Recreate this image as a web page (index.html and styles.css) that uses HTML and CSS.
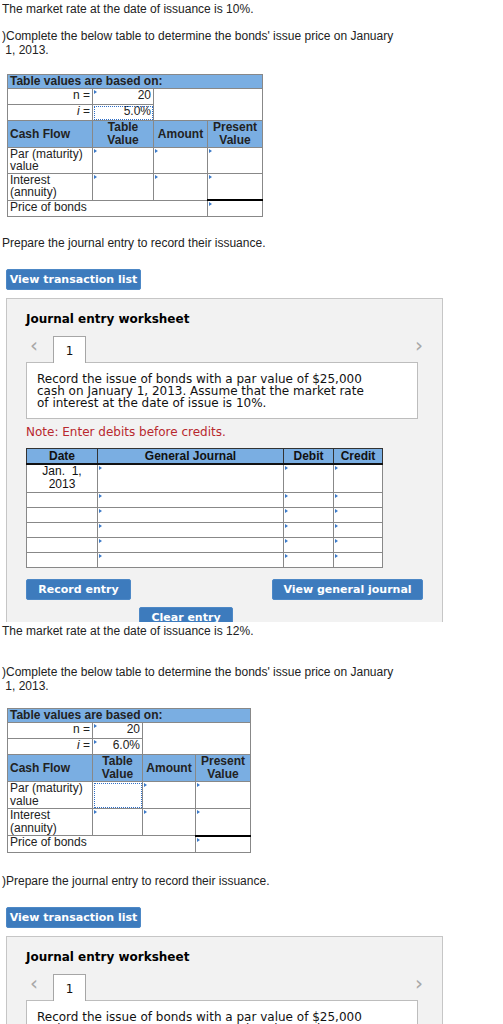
FILE: index.html
```html
<!DOCTYPE html>
<html lang="en">
<head>
  <meta charset="UTF-8">
  <meta name="viewport" content="width=device-width, initial-scale=1.0">
  <title>Bonds issue price</title>
  <link rel="stylesheet" href="styles.css">
</head>
<body>

  <!-- part 1: market rate 10% -->
  <div class="part part-clip">
    <p class="rate">The market rate at the date of issuance is 10%.</p>
    <p class="ask">)Complete the below table to determine the bonds' issue price on January<br>&nbsp;1, 2013.</p>

    <table class="pv pv-wide">
      <colgroup>
        <col class="c1"><col class="c2"><col class="c3"><col class="c4">
      </colgroup>
      <tr class="head"><td colspan="4" class="based">Table values are based on:</td></tr>
      <tr class="small">
        <td class="right">n =</td>
        <td class="right mk">20</td>
        <td colspan="2" rowspan="2"></td>
      </tr>
      <tr class="small">
        <td class="right"><i>i</i> =</td>
        <td class="right focus">5.0%</td>
      </tr>
      <tr class="head">
        <td class="left">Cash Flow</td>
        <td class="center">Table<br>Value</td>
        <td class="center">Amount</td>
        <td class="center">Present<br>Value</td>
      </tr>
      <tr class="big">
        <td>Par (maturity)<br>value</td>
        <td class="mk"></td><td class="mk"></td><td class="mk"></td>
      </tr>
      <tr class="big">
        <td>Interest<br>(annuity)</td>
        <td class="mk"></td><td class="mk"></td><td class="mk"></td>
      </tr>
      <tr class="small">
        <td colspan="3">Price of bonds</td>
        <td class="mk total"></td>
      </tr>
    </table>

    <p class="prep">Prepare the journal entry to record their issuance.</p>
    <button class="btn btn-list" type="button">View transaction list</button>

    <div class="sheet">
      <h2 class="sheet-title">Journal entry worksheet</h2>
      <div class="tabs">
        <span class="arrow">&lsaquo;</span>
        <span class="tab">1</span>
        <span class="arrow arrow-right">&rsaquo;</span>
      </div>
      <div class="desc">Record the issue of bonds with a par value of $25,000<br>cash on January 1, 2013. Assume that the market rate<br>of interest at the date of issue is 10%.</div>
      <p class="note">Note: Enter debits before credits.</p>

      <table class="jr">
        <colgroup>
          <col class="j1"><col class="j2"><col class="j3"><col class="j4">
        </colgroup>
        <tr class="jhead">
          <th>Date</th><th>General Journal</th><th>Debit</th><th>Credit</th>
        </tr>
        <tr class="jfirst">
          <td class="center">Jan.&nbsp; 1,<br>2013</td><td class="mk"></td><td class="mk"></td><td class="mk"></td>
        </tr>
        <tr class="jrow"><td></td><td class="mk"></td><td class="mk"></td><td class="mk"></td></tr>
        <tr class="jrow"><td></td><td class="mk"></td><td class="mk"></td><td class="mk"></td></tr>
        <tr class="jrow"><td></td><td class="mk"></td><td class="mk"></td><td class="mk"></td></tr>
        <tr class="jrow"><td></td><td class="mk"></td><td class="mk"></td><td class="mk"></td></tr>
        <tr class="jrow"><td></td><td class="mk"></td><td class="mk"></td><td class="mk"></td></tr>
      </table>

      <div class="actions">
        <button class="btn btn-record" type="button">Record entry</button>
        <button class="btn btn-journal" type="button">View general journal</button>
      </div>
      <button class="btn btn-clear" type="button">Clear entry</button>
    </div>
  </div>

  <!-- part 2: market rate 12% -->
  <div class="part">
    <p class="rate">The market rate at the date of issuance is 12%.</p>
    <p class="ask ask-2">)Complete the below table to determine the bonds' issue price on January<br>&nbsp;1, 2013.</p>

    <table class="pv pv-narrow">
      <colgroup>
        <col class="c1"><col class="n2"><col class="n3"><col class="c4">
      </colgroup>
      <tr class="head"><td colspan="4" class="based">Table values are based on:</td></tr>
      <tr class="small">
        <td class="right">n =</td>
        <td class="right mk">20</td>
        <td colspan="2" rowspan="2"></td>
      </tr>
      <tr class="small">
        <td class="right"><i>i</i> =</td>
        <td class="right mk">6.0%</td>
      </tr>
      <tr class="head">
        <td class="left">Cash Flow</td>
        <td class="center">Table<br>Value</td>
        <td class="center">Amount</td>
        <td class="center">Present<br>Value</td>
      </tr>
      <tr class="big">
        <td>Par (maturity)<br>value</td>
        <td class="focus"></td><td class="mk"></td><td class="mk"></td>
      </tr>
      <tr class="big">
        <td>Interest<br>(annuity)</td>
        <td class="mk"></td><td class="mk"></td><td class="mk"></td>
      </tr>
      <tr class="small">
        <td colspan="3">Price of bonds</td>
        <td class="mk total"></td>
      </tr>
    </table>

    <p class="prep prep-2">)Prepare the journal entry to record their issuance.</p>
    <button class="btn btn-list" type="button">View transaction list</button>

    <div class="sheet">
      <h2 class="sheet-title">Journal entry worksheet</h2>
      <div class="tabs">
        <span class="arrow">&lsaquo;</span>
        <span class="tab">1</span>
        <span class="arrow arrow-right">&rsaquo;</span>
      </div>
      <div class="desc">Record the issue of bonds with a par value of $25,000<br>cash on January 1, 2013. Assume that the market rate<br>of interest at the date of issue is 12%.</div>
      <p class="note">Note: Enter debits before credits.</p>
    </div>
  </div>

</body>
</html>
```

FILE: styles.css
```css
body {
  margin: 0;
  padding: 0 0 0 2px;
  background-color: #fff;
  color: #222;
  font: 12px/14px "Liberation Sans", Arial, sans-serif;
}

p {
  margin: 0;
}

.part-clip {
  height: 622px;
  overflow: hidden;
}

.rate {
  margin-top: 2px;
}

.ask {
  margin-top: 13px;
}

.ask-2 {
  margin-top: 27px;
}

/* present value tables */
.pv {
  border-collapse: collapse;
  table-layout: fixed;
  margin: 17px 0 0 5px;
  font-size: 12px;
  line-height: 13px;
}

.pv-narrow {
  margin-top: 15px;
}

.pv td {
  border: 1px solid #888;
  padding: 0 2px;
  vertical-align: top;
  position: relative;
}

.c1 { width: 85px; }
.c2 { width: 61px; }
.c3 { width: 54px; }
.c4 { width: 55px; }
.n2 { width: 50px; }
.n3 { width: 53px; }

.pv .head td {
  background-color: #7aaee2;
  font-weight: bold;
  vertical-align: middle;
}

.pv .based {
  height: 13px;
  line-height: 13px;
}

.pv .small td {
  height: 15px;
}

.pv .head td.left,
.pv .head td.center {
  height: 25px;
}

.pv .big td {
  height: 25px;
}

.pv-wide .big td {
  line-height: 12px;
}

.right { text-align: right; }
.center { text-align: center; }

.pv td.total {
  border-top: 2px solid #000;
}

.focus {
  outline: 1px dotted #2f6fc7;
  outline-offset: -2px;
}

/* little blue markers in input cells */
.mk::before {
  content: "";
  position: absolute;
  left: 1px;
  top: 1px;
  border-left: 3px solid #3b7ac8;
  border-top: 2px solid transparent;
  border-bottom: 2px solid transparent;
}

.prep {
  margin-top: 19px;
}

.prep-2 {
  margin-top: 21px;
}

/* buttons */
.btn {
  display: block;
  background-color: #3d7bbd;
  color: #fff;
  border: 1px solid #4d88c6;
  border-radius: 2px;
  font: bold 11px/19px "DejaVu Sans", Verdana, sans-serif;
  padding: 0 2px;
  height: 21px;
  white-space: nowrap;
  cursor: pointer;
}

.btn-list {
  margin: 19px 0 0 4px;
  width: 135px;
}

/* journal entry worksheet */
.sheet {
  margin: 8px 0 0 4px;
  width: 397px;
  padding: 13px 19px 40px 19px;
  background-color: #f2f2f2;
  border: 1px solid #c6c6c6;
  font-family: "DejaVu Sans", Verdana, sans-serif;
  font-size: 12px;
  color: #111;
}

.sheet-title {
  margin: 0;
  font-size: 12px;
  line-height: 14px;
  font-weight: bold;
  color: #000;
}

.tabs {
  display: flex;
  align-items: flex-end;
  margin-top: 10px;
  height: 26px;
  position: relative;
}

.arrow {
  color: #a8a8a8;
  font-size: 20px;
  line-height: 18px;
  align-self: flex-start;
  margin: 0 15px 0 4px;
}

.arrow-right {
  margin: 0 0 0 auto;
}

.tab {
  width: 31px;
  height: 26px;
  border: 1px solid #a6a6a6;
  border-bottom: none;
  background-color: #fff;
  text-align: center;
  line-height: 28px;
  font-size: 12px;
  margin-bottom: -1px;
  position: relative;
  z-index: 1;
}

.desc {
  width: 370px;
  height: 45px;
  padding: 10px 10px 0 10px;
  background-color: #fff;
  border: 1px solid #bdbdbd;
  line-height: 12px;
  font-size: 12px;
}

.note {
  margin-top: 6px;
  color: #b8282e;
  font-size: 12px;
  line-height: 14px;
}

.jr {
  border-collapse: collapse;
  table-layout: fixed;
  margin-top: 9px;
  font-family: "Liberation Sans", Arial, sans-serif;
  font-size: 12px;
  line-height: 13px;
  background-color: #fff;
}

.j1 { width: 71px; }
.j2 { width: 186px; }
.j3 { width: 50px; }
.j4 { width: 49px; }

.jr th {
  background-color: #7aaee2;
  border: 1px solid #333;
  border-bottom: 2px solid #111;
  height: 14px;
  padding: 0;
  font-weight: bold;
}

.jr td {
  border: 1px solid #888;
  padding: 0;
  vertical-align: top;
  position: relative;
}

.jfirst td {
  height: 27px;
}

.jrow td {
  height: 14px;
}

.actions {
  display: flex;
  justify-content: space-between;
  margin-top: 11px;
}

.btn-record {
  width: 105px;
}

.btn-journal {
  width: 151px;
}

.btn-clear {
  width: 94px;
  margin: 7px 0 0 113px;
}
```
